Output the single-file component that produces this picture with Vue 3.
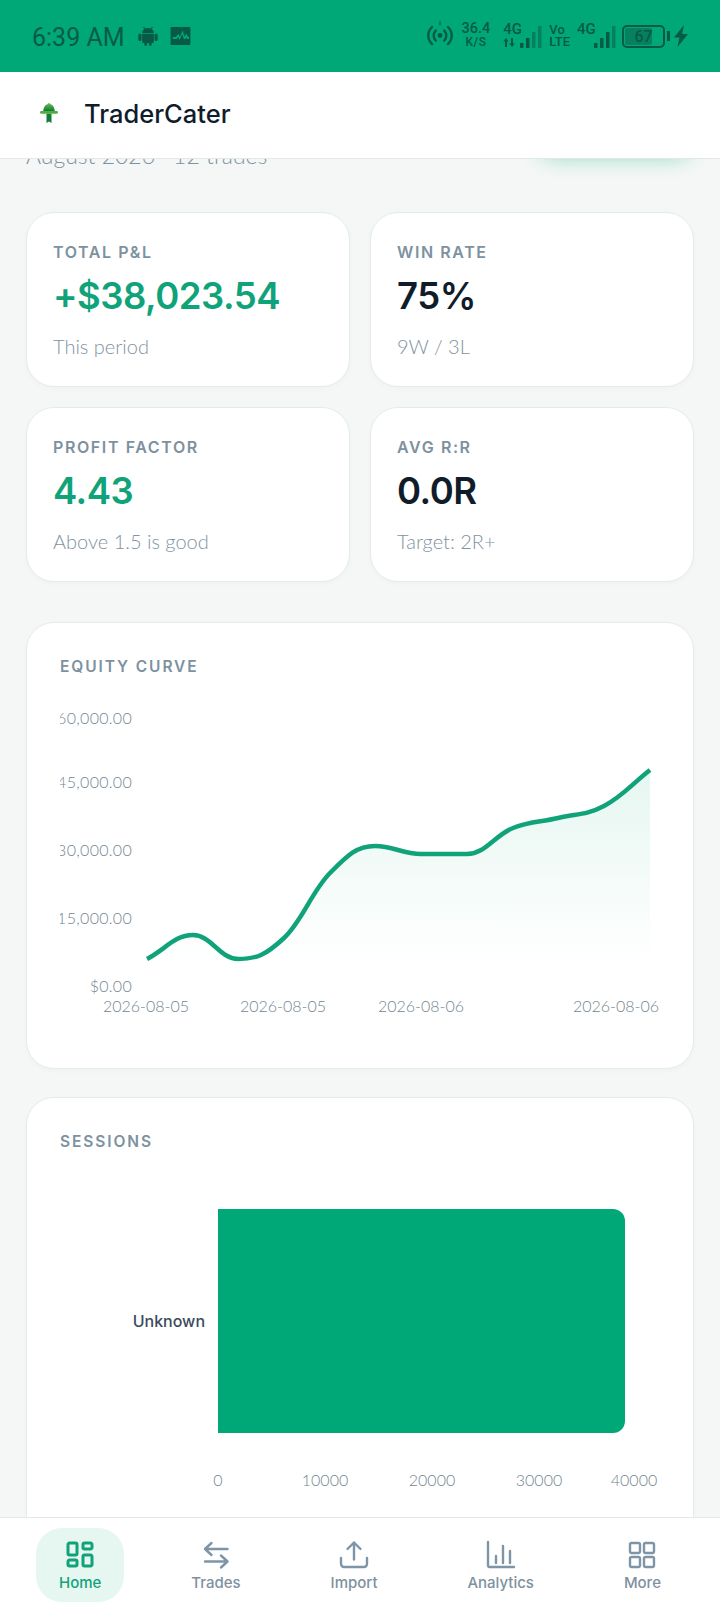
<template>
  <div class="app">
    <div class="status-bar">
      <div class="status-left">
        <span class="time">6:39 AM</span>
        <svg class="st-android" viewBox="0 0 20 20" width="20" height="20">
          <path d="M6.300 2.900 5.200 1.200l.8-.5 1.200 1.800A6.500 6.500 0 0 1 10 2c1 0 2 .2 2.800.5L14 .7l.8.5-1.100 1.700c1.300 1 2.100 2.500 2.200 4.100H4.100c.1-1.600.9-3.100 2.200-4.100Z" />
          <rect x="0.300" y="7.500" width="3.200" height="7.500" rx="1.600" />
          <rect x="16.500" y="7.500" width="3.200" height="7.500" rx="1.600" />
          <path d="M4.100 7.800h11.800v8c0 .7-.6 1.200-1.200 1.200h-1v1.500a1.400 1.400 0 0 1-2.800 0V17H9.100v1.500a1.400 1.400 0 0 1-2.800 0V17h-1c-.7 0-1.200-.5-1.200-1.200Z" />
        </svg>
        <svg class="st-pulse" viewBox="0 0 22 20" width="21" height="18">
          <path fill-rule="evenodd" d="M1 0h20a1 1 0 0 1 1 1v18a1 1 0 0 1-1 1H1a1 1 0 0 1-1-1V1a1 1 0 0 1 1-1Zm1.500 11.200v2h4.300l1.500-2.300 1.700 3.500 3-7 1.700 5.800h1.800l1-1.900 1 1.900h1.900v-2h-.8l-2.100-3.600-1.900 3.300L13.300 4l-3.100 7-1.500-3.100-2.900 3.300Z" />
        </svg>
      </div>
      <div class="status-right">
        <svg class="st-hotspot" viewBox="0 0 28 28" width="28" height="28" fill="none">
          <path d="M6 7C1 12 1 19 6 24M22 7c5 5 5 12 0 17M9.800 10.500c-2.800 3-2.800 7 0 10M18.200 10.500c2.800 3 2.800 7 0 10" stroke-width="2.400" stroke-linecap="round" />
          <circle cx="14" cy="15.500" r="2.400" class="st-dot" />
          <path d="M14 1v4.500" stroke-width="1" />
        </svg>
        <div class="st-speed">
          <span class="st-speed-num">36.4</span>
          <span class="st-speed-unit">K/S</span>
        </div>
        <div class="st-signal">
          <span class="st-4g">4G</span>
          <svg class="st-updown" viewBox="0 0 12 9" width="12" height="9">
            <path d="M3 0 .3 3.500H2V9h2V3.500h1.700ZM9 9l2.700-3.500H10V0H8v5.500H6.300Z" />
          </svg>
          <svg class="st-bars" viewBox="0 0 22 22" width="22" height="22">
            <rect x="0" y="17" width="3.500" height="5" />
            <rect x="6" y="12" width="3.500" height="10" />
            <rect x="12" y="6" width="3.500" height="16" class="st-off" />
            <rect x="18" y="0" width="3.500" height="22" class="st-off" />
          </svg>
        </div>
        <div class="st-volte"><span>Vo</span><span>LTE</span></div>
        <div class="st-signal st-signal-b">
          <span class="st-4g">4G</span>
          <svg class="st-bars" viewBox="0 0 22 22" width="22" height="22">
            <rect x="0" y="17" width="3.500" height="5" />
            <rect x="6" y="12" width="3.500" height="10" />
            <rect x="12" y="6" width="3.500" height="16" />
            <rect x="18" y="0" width="3.500" height="22" class="st-off" />
          </svg>
        </div>
        <div class="st-battery">
          <div class="st-battery-fill"></div>
          <span>67</span>
        </div>
        <div class="st-nub"></div>
        <svg class="st-bolt" viewBox="0 0 14 22" width="14" height="22">
          <path d="M10 0 0 12.500h5.500L3.500 22 14 9H8Z" />
        </svg>
      </div>
    </div>

    <header class="app-header">
      <svg class="logo" viewBox="0 0 20 22" width="20" height="22">
        <defs>
          <linearGradient id="logoDome" x1="0" y1="0" x2="0" y2="1">
            <stop offset="0" stop-color="#6cc05c" />
            <stop offset="1" stop-color="#0d7a2c" />
          </linearGradient>
        </defs>
        <path d="M10 1a1 1 0 0 1 1 1c2.800.6 4.500 3.200 4.800 7H4.200C4.500 5.200 6.200 2.600 9 2a1 1 0 0 1 1-1Z" fill="url(#logoDome)" />
        <rect x="1" y="9" width="18" height="2.800" rx="1.400" fill="#4fae3f" />
        <path d="M7.500 11.800h5V21L10 19.400 7.500 21Z" fill="#0f7d34" />
      </svg>
      <span class="brand">TraderCater</span>
    </header>

    <main class="main">
      <div class="scroll">
        <div class="page-head">
          <p class="page-sub">August 2026 · 12 trades</p>
          <div class="head-btn"></div>
        </div>

        <div class="stat-grid">
          <div v-for="s in stats" :key="s.label" class="card stat">
            <div class="stat-label">{{ s.label }}</div>
            <div class="stat-value" :class="{ green: s.green }">{{ s.value }}</div>
            <div class="stat-note">{{ s.note }}</div>
          </div>
        </div>

        <section class="card chart-card">
          <h3 class="chart-title">EQUITY CURVE</h3>
          <svg class="equity" viewBox="0 0 600 320" width="600" height="320">
            <defs>
              <linearGradient id="eqFill" x1="0" y1="0" x2="0" y2="1">
                <stop offset="0" stop-color="#00a878" stop-opacity="0.1" />
                <stop offset="1" stop-color="#00a878" stop-opacity="0" />
              </linearGradient>
            </defs>
            <path :d="areaPath" fill="url(#eqFill)" />
            <path :d="linePath" fill="none" stroke="#10a37a" stroke-width="4.500" />
            <text v-for="t in yTicks" :key="t.label" class="axis axis-y" x="72" :y="t.y" text-anchor="end">{{ t.label }}</text>
            <text v-for="t in xTicks" :key="t.x" class="axis" :x="t.x" y="310" text-anchor="middle">{{ t.label }}</text>
          </svg>
        </section>

        <section class="card chart-card sessions">
          <h3 class="chart-title">SESSIONS</h3>
          <svg class="session-chart" viewBox="0 0 600 370" width="600" height="370">
            <path d="M158 57h395a12 12 0 0 1 12 12v200a12 12 0 0 1-12 12H158Z" fill="#00a878" />
            <text class="cat" x="145" y="175" text-anchor="end">Unknown</text>
            <text v-for="t in sessionTicks" :key="t.label" class="axis" :x="t.x" y="334" text-anchor="middle">{{ t.label }}</text>
          </svg>
        </section>
      </div>
    </main>

    <nav class="bottom-nav">
      <div v-for="n in nav" :key="n.label" class="nav-item" :class="{ active: n.active }">
        <svg viewBox="0 0 32 32" width="32" height="32" fill="none" :stroke-width="n.active ? 3 : 2.400" stroke-linecap="round" stroke-linejoin="round">
          <path v-for="d in n.paths" :key="d" :d="d" />
        </svg>
        <span>{{ n.label }}</span>
      </div>
    </nav>
  </div>
</template>

<script setup>
const stats = [
  { label: "TOTAL P&L", value: "+$38,023.54", note: "This period", green: true },
  { label: "WIN RATE", value: "75%", note: "9W / 3L" },
  { label: "PROFIT FACTOR", value: "4.43", note: "Above 1.5 is good", green: true },
  { label: "AVG R:R", value: "0.0R", note: "Target: 2R+" },
];

const nav = [
  {
    label: "Home",
    active: true,
    paths: [
      "M4 5.500A1.500 1.500 0 0 1 5.500 4h6A1.500 1.500 0 0 1 13 5.500v9a1.500 1.500 0 0 1-1.500 1.500h-6A1.500 1.500 0 0 1 4 14.500Z",
      "M19 5.500A1.500 1.500 0 0 1 20.500 4h6A1.500 1.500 0 0 1 28 5.500v3A1.500 1.500 0 0 1 26.500 10h-6A1.500 1.500 0 0 1 19 8.500Z",
      "M4 22.500A1.500 1.500 0 0 1 5.500 21h6a1.500 1.500 0 0 1 1.500 1.500v3a1.500 1.500 0 0 1-1.500 1.500h-6A1.500 1.500 0 0 1 4 25.500Z",
      "M19 17.500a1.500 1.500 0 0 1 1.500-1.500h6a1.500 1.500 0 0 1 1.500 1.500v8a1.500 1.500 0 0 1-1.500 1.500h-6a1.500 1.500 0 0 1-1.500-1.500Z",
    ],
  },
  {
    label: "Trades",
    paths: ["M27.500 10H5M11.500 4 5 10l6.500 6", "M5 22.500h22.500M21 16.500l6.500 6-6.500 6"],
  },
  {
    label: "Import",
    paths: ["M16 20.500V3.500M9.500 10 16 3.500 22.500 10", "M3 19v6a3 3 0 0 0 3 3h20a3 3 0 0 0 3-3v-6"],
  },
  {
    label: "Analytics",
    paths: ["M3 3v23.500A1.500 1.500 0 0 0 4.500 28H29", "M11 24v-7M18 24V7M25 24V12"],
  },
  {
    label: "More",
    paths: [
      "M4 5.500A1.500 1.500 0 0 1 5.500 4h7A1.500 1.500 0 0 1 14 5.500v7a1.500 1.500 0 0 1-1.500 1.500h-7A1.500 1.500 0 0 1 4 12.500Z",
      "M18 5.500A1.500 1.500 0 0 1 19.500 4h7A1.500 1.500 0 0 1 28 5.500v7a1.500 1.500 0 0 1-1.500 1.500h-7a1.500 1.500 0 0 1-1.500-1.500Z",
      "M4 19.500A1.500 1.500 0 0 1 5.500 18h7a1.500 1.500 0 0 1 1.500 1.500v7a1.500 1.500 0 0 1-1.500 1.500h-7A1.500 1.500 0 0 1 4 26.500Z",
      "M18 19.500a1.500 1.500 0 0 1 1.500-1.500h7a1.500 1.500 0 0 1 1.500 1.500v7a1.500 1.500 0 0 1-1.500 1.500h-7a1.500 1.500 0 0 1-1.500-1.500Z",
    ],
  },
];

// svg origin sits at page (60, 700)
const equity = [
  [87, 257], [133, 233], [178, 257], [224, 236], [270, 171], [315, 144],
  [361, 152], [407, 152], [453, 126], [498, 116], [544, 104], [590, 68],
];

// flat tangent at peaks and dips, like the chart lib's smooth line
function slope(prev, cur, next) {
  if (!prev || !next) return null;
  if ((cur[1] - prev[1]) * (next[1] - cur[1]) <= 0) return 0;
  return (next[1] - prev[1]) / (next[0] - prev[0]);
}

function smooth(points) {
  let d = `M${points[0][0]} ${points[0][1]}`;
  for (let i = 0; i < points.length - 1; i++) {
    const p1 = points[i];
    const p2 = points[i + 1];
    const dx = (p2[0] - p1[0]) * 0.4;
    const s1 = slope(points[i - 1], p1, p2);
    const s2 = slope(p1, p2, points[i + 2]);
    const line = (p2[1] - p1[1]) / (p2[0] - p1[0]);
    const c1y = p1[1] + (s1 === null ? line : s1) * dx;
    const c2y = p2[1] - (s2 === null ? line : s2) * dx;
    d += ` C${p1[0] + dx} ${c1y} ${p2[0] - dx} ${c2y} ${p2[0]} ${p2[1]}`;
  }
  return d;
}

const linePath = smooth(equity);
const areaPath = `${linePath} L590 262 L87 262 Z`;

const yTicks = [
  { label: "$60,000.00", y: 22 },
  { label: "$45,000.00", y: 86 },
  { label: "$30,000.00", y: 154 },
  { label: "$15,000.00", y: 222 },
  { label: "$0.00", y: 290 },
];
const xTicks = [
  { label: "2026-08-05", x: 86 },
  { label: "2026-08-05", x: 223 },
  { label: "2026-08-06", x: 361 },
  { label: "2026-08-06", x: 556 },
];
const sessionTicks = [
  { label: "0", x: 158 },
  { label: "10000", x: 265 },
  { label: "20000", x: 372 },
  { label: "30000", x: 479 },
  { label: "40000", x: 574 },
];
</script>

<style scoped>
.app {
  width: 720px;
  height: 1612px;
  display: flex;
  flex-direction: column;
  overflow: hidden;
  background: #f4f7f6;
  font-family: Lato, "Open Sans", sans-serif;
}

/* status bar */
.status-bar {
  height: 72px;
  flex: none;
  background: #00a878;
  color: #075a43;
  display: flex;
  justify-content: space-between;
  align-items: center;
  padding: 0 32px 0 32px;
  box-sizing: border-box;
  font-family: Roboto, sans-serif;
}
.status-left {
  display: flex;
  align-items: center;
}
.time {
  font-size: 25px;
  line-height: 30px;
  padding-top: 4px;
  margin-right: 13px;
  color: #0a5c46;
}
.st-android,
.st-pulse,
.st-bolt,
.st-updown {
  fill: #075a43;
}
.st-pulse {
  margin-left: 12px;
}
.status-right {
  display: flex;
  align-items: center;
}
.st-hotspot {
  stroke: #075a43;
  margin: -4px 8px 0 0;
}
.st-dot {
  fill: #075a43;
  stroke: none;
}
.st-speed {
  display: flex;
  flex-direction: column;
  align-items: center;
  font-weight: 500;
  margin: -2px 13px 0 0;
}
.st-speed-num {
  font-size: 14.500px;
  line-height: 14px;
}
.st-speed-unit {
  font-size: 12px;
  line-height: 12px;
  letter-spacing: 0.500px;
}
.st-signal {
  position: relative;
  width: 38px;
  height: 24px;
  margin-right: 8px;
}
.st-signal-b {
  margin-right: 3px;
}
.st-4g {
  position: absolute;
  left: 0;
  top: -2px;
  font-size: 15px;
  line-height: 14px;
  font-weight: 500;
}
.st-updown {
  position: absolute;
  left: 0;
  top: 14px;
}
.st-bars {
  position: absolute;
  right: -1px;
  bottom: 0;
  fill: #075a43;
}
.st-off {
  fill: #07805f;
}
.st-volte {
  display: flex;
  flex-direction: column;
  font-size: 13px;
  line-height: 12px;
  font-weight: 500;
  margin-right: 7px;
}
.st-battery {
  position: relative;
  width: 43px;
  height: 23px;
  box-sizing: border-box;
  border: 2px solid #075a43;
  border-radius: 5px;
  display: flex;
  align-items: center;
  justify-content: center;
  font-size: 16px;
  font-weight: 500;
  margin-left: 4px;
}
.st-battery-fill {
  position: absolute;
  left: 1px;
  top: 1px;
  bottom: 1px;
  width: 27px;
  background: #07805f;
  border-radius: 2px;
}
.st-battery span {
  position: relative;
}
.st-nub {
  width: 3px;
  height: 10px;
  margin-left: 2px;
  background: #075a43;
}
.st-bolt {
  margin-left: 4px;
}

/* header */
.app-header {
  height: 87px;
  flex: none;
  position: relative;
  z-index: 2;
  background: #fff;
  border-bottom: 1px solid #e2e7e9;
  box-sizing: border-box;
  display: flex;
  align-items: center;
  padding: 0 0 4px 39px;
}
.logo {
  margin-right: 25px;
}
.brand {
  font-family: Inter, sans-serif;
  font-size: 25.500px;
  font-weight: 500;
  color: #111c2b;
}

/* scrolled content */
.main {
  flex: 1;
  min-height: 0;
  overflow: hidden;
}
.scroll {
  margin-top: -16px;
  padding: 0 26px;
}
.page-head {
  display: flex;
  justify-content: space-between;
  align-items: flex-start;
  margin-bottom: 45px;
}
.page-sub {
  margin: 0;
  font-size: 23px;
  line-height: 24px;
  font-weight: 300;
  color: #7f92a0;
}
.head-btn {
  width: 150px;
  height: 40px;
  margin: -35px 4px 0 0;
  border-radius: 14px;
  background: #00a878;
  box-shadow: 0 8px 22px rgba(0, 168, 120, 0.45);
}
.card {
  background: #fff;
  border: 1px solid #e5eaec;
  border-radius: 28px;
  box-sizing: border-box;
  box-shadow: 0 2px 6px rgba(20, 40, 50, 0.025);
}
.stat-grid {
  display: grid;
  grid-template-columns: 324px 324px;
  grid-auto-rows: 175px;
  gap: 20px;
}
.stat {
  padding: 29px 26px 0;
}
.stat-label {
  font-family: Inter, sans-serif;
  font-size: 16px;
  line-height: 20px;
  font-weight: 600;
  letter-spacing: 1.600px;
  color: #7d919f;
}
.stat-value {
  margin-top: 12px;
  font-family: Inter, sans-serif;
  font-size: 36.500px;
  line-height: 44px;
  font-weight: 600;
  letter-spacing: -0.500px;
  color: #111c2b;
}
.stat-value.green {
  color: #10a37a;
}
.stat-note {
  margin-top: 16px;
  font-size: 20px;
  line-height: 24px;
  font-weight: 300;
  color: #7f92a0;
}
.chart-card {
  margin-top: 40px;
  height: 447px;
  padding: 34px 0 0 33px;
}
.sessions {
  margin-top: 28px;
  height: 500px;
}
.chart-title {
  margin: 0;
  font-family: Inter, sans-serif;
  font-size: 15.500px;
  line-height: 20px;
  font-weight: 600;
  letter-spacing: 1.900px;
  color: #7d919f;
}
.equity {
  display: block;
  margin-top: 25px;
}
.session-chart {
  display: block;
  margin-top: 0;
}
.axis {
  font-family: Lato, sans-serif;
  font-size: 16px;
  font-weight: 300;
  fill: #73858f;
}
.axis-y {
  letter-spacing: 0.300px;
}
.cat {
  font-family: Inter, sans-serif;
  font-size: 16px;
  font-weight: 500;
  fill: #3b4a5c;
}

/* bottom nav */
.bottom-nav {
  height: 95px;
  flex: none;
  position: relative;
  z-index: 2;
  background: #fff;
  border-top: 1px solid #e2e7e9;
  box-sizing: border-box;
  display: flex;
  justify-content: space-between;
  align-items: flex-start;
  padding: 10px 36px 0;
}
.nav-item {
  height: 74px;
  padding: 11px 23px 0;
  border-radius: 26px;
  display: flex;
  flex-direction: column;
  align-items: center;
  box-sizing: border-box;
  stroke: #7d95a7;
  color: #7d919f;
  font-family: Inter, sans-serif;
  font-size: 15px;
  line-height: 18px;
  font-weight: 500;
}
.nav-item span {
  margin-top: 3px;
}
.nav-item.active {
  background: #e6f6f1;
  stroke: #10a37a;
  color: #10a37a;
}
</style>

<style>
html,
body {
  margin: 0;
  padding: 0;
  background: #f4f7f6;
}
</style>
